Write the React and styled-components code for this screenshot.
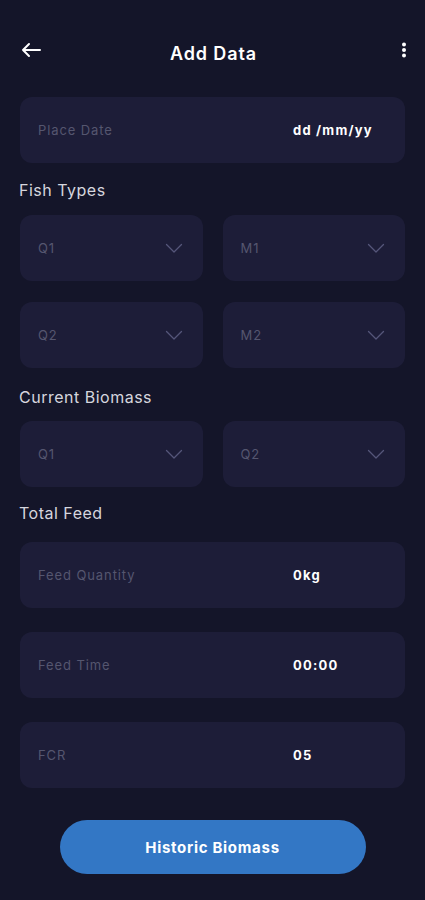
import React from "react";
import styled, { createGlobalStyle } from "styled-components";

const GlobalStyle = createGlobalStyle`
  body {
    margin: 0;
    background: #141529;
    font-family: "Inter", "Noto Sans", sans-serif;
  }
`;

function BackArrow() {
  return (
    <svg width="22" height="16" viewBox="0 0 22 16" fill="none">
      <path
        d="M20 8H3M9 2L3 8l6 6"
        stroke="#fff"
        strokeWidth="2"
        strokeLinecap="round"
        strokeLinejoin="round"
      />
    </svg>
  );
}

function Kebab() {
  return (
    <svg width="6" height="16" viewBox="0 0 6 16">
      <circle cx="3" cy="2.5" r="2" fill="#fff" />
      <circle cx="3" cy="8" r="2" fill="#fff" />
      <circle cx="3" cy="13.5" r="2" fill="#fff" />
    </svg>
  );
}

function Chevron() {
  return (
    <svg width="18" height="10" viewBox="0 0 18 10" fill="none">
      <path
        d="M1.5 1.5l7.5 7.5 7.5-7.5"
        stroke="#55567a"
        strokeWidth="1.3"
        strokeLinecap="round"
        strokeLinejoin="round"
      />
    </svg>
  );
}

function Select({ label }) {
  return (
    <SelectCard>
      <Label>{label}</Label>
      <Chevron />
    </SelectCard>
  );
}

function Field({ label, value }) {
  return (
    <FieldCard>
      <Label>{label}</Label>
      <Value>{value}</Value>
    </FieldCard>
  );
}

export default function App() {
  return (
    <Page>
      <GlobalStyle />
      <Header>
        <IconButton>
          <BackArrow />
        </IconButton>
        <Title>Add Data</Title>
        <IconButton $right>
          <Kebab />
        </IconButton>
      </Header>

      <Field label="Place Date" value="dd /mm/yy" />

      <SectionTitle>Fish Types</SectionTitle>
      <Grid>
        <Select label="Q1" />
        <Select label="M1" />
        <Select label="Q2" />
        <Select label="M2" />
      </Grid>

      <SectionTitle $before={19} $after={14}>
        Current Biomass
      </SectionTitle>
      <Grid>
        <Select label="Q1" />
        <Select label="Q2" />
      </Grid>

      <SectionTitle $before={16} $after={19}>
        Total Feed
      </SectionTitle>
      <Stack>
        <Field label="Feed Quantity" value="0kg" />
        <Field label="Feed Time" value="00:00" />
        <Field label="FCR" value="05" />
      </Stack>

      <ButtonRow>
        <PrimaryButton>Historic Biomass</PrimaryButton>
      </ButtonRow>
    </Page>
  );
}

const Page = styled.div`
  min-height: 900px;
  box-sizing: border-box;
  padding: 40px 20px 0 20px;
  background: #141529;
  color: #fff;
`;

const Header = styled.div`
  display: flex;
  align-items: center;
  justify-content: space-between;
  height: 26px;
  margin-bottom: 31px;
`;

const IconButton = styled.div`
  display: flex;
  align-items: center;
  justify-content: ${(p) => (p.$right ? "flex-end" : "flex-start")};
  width: 40px;
  height: 26px;
  margin-top: -6px;
  margin-right: ${(p) => (p.$right ? "-2px" : "0")};
`;

const Title = styled.h1`
  margin: 0;
  font-size: 18px;
  font-weight: 600;
  color: #fff;
  letter-spacing: 0.9px;
`;

const Card = styled.div`
  height: 66px;
  box-sizing: border-box;
  background: #1d1d38;
  border-radius: 12px;
  padding: 0 20px 0 18px;
`;

const FieldCard = styled(Card)`
  display: grid;
  grid-template-columns: 1fr 92px;
  align-items: center;
`;

const SelectCard = styled(Card)`
  display: flex;
  align-items: center;
  justify-content: space-between;
`;

const Label = styled.span`
  font-size: 13px;
  color: #55566f;
  letter-spacing: 0.9px;
`;

const Value = styled.span`
  font-size: 13px;
  font-weight: 700;
  color: #fff;
  letter-spacing: 1.2px;
  white-space: nowrap;
`;

const SectionTitle = styled.h2`
  margin: ${(p) => p.$before || 17}px 0 ${(p) => p.$after || 15}px -1px;
  font-size: 16px;
  line-height: 20px;
  font-weight: 400;
  color: #d6d6de;
  letter-spacing: 0.5px;
`;

const Grid = styled.div`
  display: grid;
  grid-template-columns: 1fr 1fr;
  column-gap: 20px;
  row-gap: 21px;
`;

const Stack = styled.div`
  display: flex;
  flex-direction: column;
  gap: 24px;
`;

const ButtonRow = styled.div`
  display: flex;
  justify-content: center;
  margin-top: 32px;
`;

const PrimaryButton = styled.button`
  width: 306px;
  height: 54px;
  border: none;
  border-radius: 27px;
  background: #3377c5;
  color: #fff;
  font-family: inherit;
  font-size: 15px;
  font-weight: 700;
  letter-spacing: 0.7px;
`;
